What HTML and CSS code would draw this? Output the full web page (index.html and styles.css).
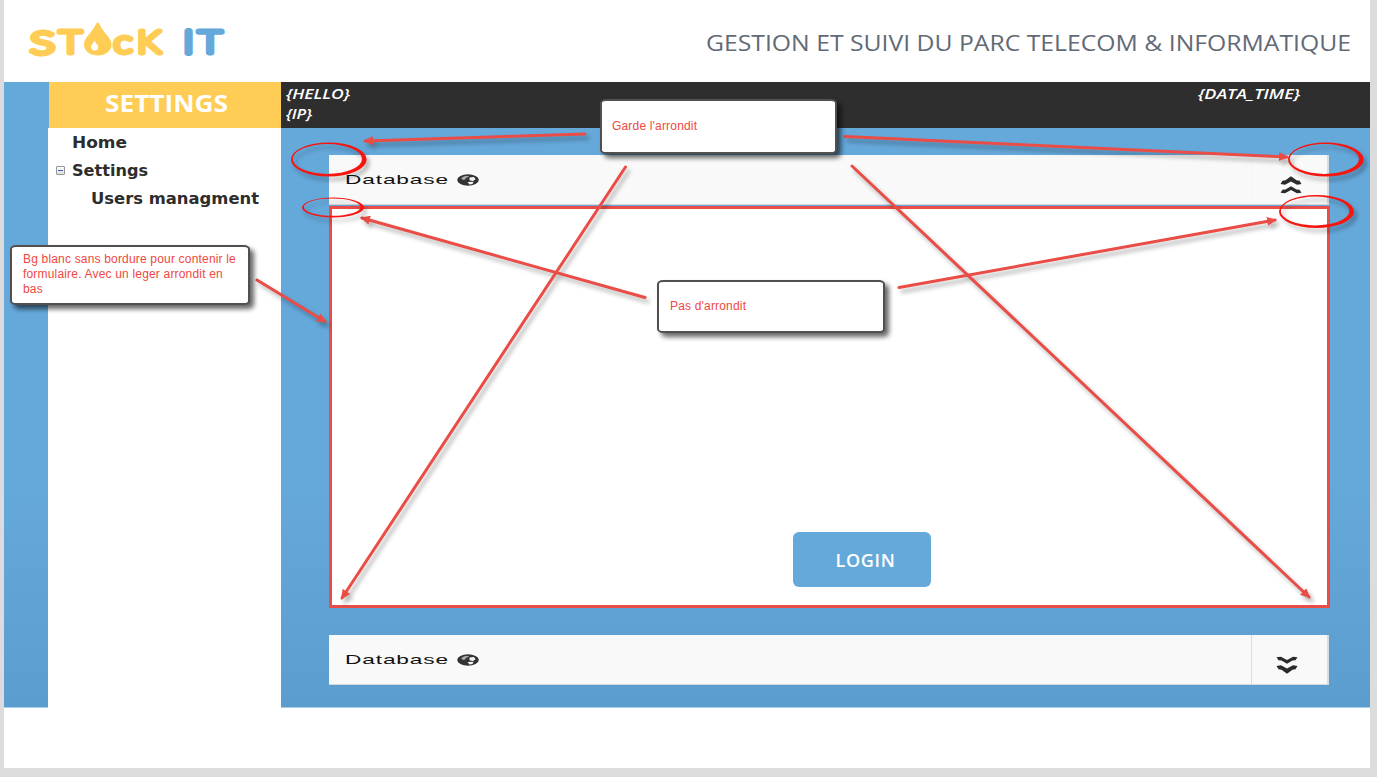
FILE: index.html
```html
<!DOCTYPE html>
<html lang="fr">
<head>
<meta charset="utf-8">
<title>Stock IT</title>
<link rel="stylesheet" href="styles.css">
</head>
<body>
<svg class="defs" width="0" height="0">
  <defs>
    <symbol id="globe" viewBox="0 0 22 12">
      <ellipse cx="11" cy="6" rx="10.8" ry="5.8" fill="#333"/>
      <path d="M4.500 3.700 Q7 1.800 11 1.700 L12 2.600 L9 4 L8 5.500 L6 6 Q4 5 4.500 3.700Z" fill="#aaa"/>
      <path d="M12.500 3.600 L17 3 L18.500 5.200 L16 7 L12.500 6.200Z M10.500 8 L16.500 7.800 L15.500 10 L12.500 10.500Z" fill="#f4f4f4"/>
    </symbol>
    <symbol id="chevrons" viewBox="0 0 22 18">
      <path d="M0.500 1.200 L5 0.800 L11 4 L17 0.800 L21.500 1.200 L19.500 4.300 L16.500 4.600 L11 7.800 L5.500 4.600 L2.500 4.300Z M0.500 10 L5 9.300 L11 12.600 L17 9.300 L21.500 10 L19.500 13.300 L16.500 13.800 L11 17.800 L5.500 13.800 L2.500 13.300Z" fill="#2b2b2b"/>
    </symbol>
  </defs>
</svg>
<div class="page">
  <header class="top">
    <svg class="logo" width="200" height="40" viewBox="27 20 200 40">
      <g class="logo-text yellow">
        <text x="30" y="53.500" textLength="25" lengthAdjust="spacingAndGlyphs">S</text>
        <text x="59" y="53" textLength="23" lengthAdjust="spacingAndGlyphs">T</text>
        <text x="113.500" y="53" textLength="19" lengthAdjust="spacingAndGlyphs">c</text>
        <text x="137" y="53" textLength="24" lengthAdjust="spacingAndGlyphs">K</text>
      </g>
      <path class="drop" fill-rule="evenodd" d="M97.500 22.500 Q99 22.500 100 25 C103 33 111.500 37 111.500 44.500 C111.500 51 105.500 55.500 98 55.500 C90 55.500 84 51 84 44.500 C84 37 92 33 95.500 25 Q96.500 22.500 97.500 22.500Z M94.500 40.500 C93.500 43.500 91 44.500 91 47 C91 49.500 92.500 50.500 94.500 50.500 C96.700 50.500 98.200 49.500 98.200 47 C98.200 44.500 95.500 43.500 94.500 40.500Z"/>
      <g class="logo-text blue">
        <text class="wide-stem" x="184" y="52.500" textLength="9" lengthAdjust="spacingAndGlyphs">I</text>
        <text x="198" y="53" textLength="24" lengthAdjust="spacingAndGlyphs">T</text>
      </g>
    </svg>
    <svg class="slogan" width="650" height="36"><text x="3" y="25" textLength="645" lengthAdjust="spacingAndGlyphs">GESTION ET SUIVI DU PARC TELECOM &amp; INFORMATIQUE</text></svg>
  </header>

  <div class="body">
    <aside class="sidebar">
      <h1 class="side-title"><svg width="232" height="46"><text x="56" y="30" textLength="123" lengthAdjust="spacingAndGlyphs">SETTINGS</text></svg></h1>
      <nav class="menu">
        <svg class="item" width="200" height="28"><text x="0" y="20" textLength="55" lengthAdjust="spacingAndGlyphs">Home</text></svg>
        <div class="item branch">
          <i class="toggle"></i>
          <svg width="200" height="28"><text x="0" y="20" textLength="76" lengthAdjust="spacingAndGlyphs">Settings</text></svg>
        </div>
        <svg class="item sub" width="185" height="28"><text x="0" y="20" textLength="168" lengthAdjust="spacingAndGlyphs">Users managment</text></svg>
      </nav>
    </aside>
    <main class="main">
      <div class="infobar">
        <svg width="90" height="46"><text x="0" y="17" textLength="64" lengthAdjust="spacingAndGlyphs">{HELLO}</text><text x="0" y="36.500" textLength="26" lengthAdjust="spacingAndGlyphs">{IP}</text></svg>
        <svg width="107" height="46"><text x="0" y="17" textLength="102" lengthAdjust="spacingAndGlyphs">{DATA_TIME}</text></svg>
      </div>
      <div class="content">
        <section class="bar">
          <div class="bar-name">
            <svg width="106" height="20"><text x="0" y="14" textLength="104" lengthAdjust="spacingAndGlyphs">Database</text></svg>
            <svg class="globe" width="22" height="12"><use href="#globe"/></svg>
          </div>
          <div class="bar-toggle open"><svg width="22" height="18"><use href="#chevrons"/></svg></div>
        </section>
        <section class="panel"><button class="login">LOGIN</button></section>
        <section class="bar">
          <div class="bar-name">
            <svg width="106" height="20"><text x="0" y="14" textLength="104" lengthAdjust="spacingAndGlyphs">Database</text></svg>
            <svg class="globe" width="22" height="12"><use href="#globe"/></svg>
          </div>
          <div class="bar-toggle"><svg width="22" height="18"><use href="#chevrons"/></svg></div>
        </section>
      </div>
    </main>
  </div>
</div>

<!-- Review notes drawn over the page -->
<svg class="notes" width="1377" height="777">
  <defs>
    <marker id="head" markerUnits="userSpaceOnUse" markerWidth="12" markerHeight="10" refX="8" refY="4.500" orient="auto"><path d="M0 0 L10 4.500 L0 9Z" fill="#ea4c46"/></marker>
  </defs>
  <g class="arrows">
    <path d="M585 134 L365 141"/>
    <path d="M845 136.500 L1287 157"/>
    <path d="M625.500 167 L342 598"/>
    <path d="M852 166 L1309 597"/>
    <path d="M645 297.500 L362 218"/>
    <path d="M899 287.500 L1275 220"/>
    <path d="M257 280 L325 321.500"/>
  </g>
  <g class="rings">
    <path d="M291 159.500a37.800 17 0 1 0 75.600 0a37.800 17 0 1 0 -75.600 0Z M292.800 159a34.600 14.900 0 1 0 69.200 0a34.600 14.900 0 1 0 -69.200 0Z"/>
    <path d="M302 207.500a31 10 0 1 0 62 0a31 10 0 1 0 -62 0Z M303.800 207.100a28.400 8.700 0 1 0 56.800 0a28.400 8.700 0 1 0 -56.800 0Z"/>
    <path d="M1288 159.500a37.800 17 0 1 0 75.600 0a37.800 17 0 1 0 -75.600 0Z M1289.800 159a34.600 14.900 0 1 0 69.200 0a34.600 14.900 0 1 0 -69.200 0Z"/>
    <path d="M1279 211.500a37.500 16.500 0 1 0 75 0a37.500 16.500 0 1 0 -75 0Z M1280.800 211a34.300 14.400 0 1 0 68.600 0a34.300 14.400 0 1 0 -68.600 0Z"/>
  </g>
</svg>
<div class="callout keep">Garde l'arrondit</div>
<div class="callout none">Pas d'arrondit</div>
<div class="callout white-bg">Bg blanc sans bordure pour contenir le<br>formulaire. Avec un leger arrondit en<br>bas</div>
</body>
</html>
```
FILE: styles.css
```css
* { box-sizing: border-box; }
body {
  margin: 0;
  height: 777px;
  padding: 0 7px 9px 4px;
  background: #dcdcdc;
  overflow: hidden;
  font-family: "Liberation Sans", Arial, sans-serif;
}
svg { display: block; flex: none; }
.defs { position: absolute; }
.page { height: 768px; background: #fff; }

.top {
  height: 82px;
  display: flex;
  justify-content: space-between;
  padding: 20px 17px 0 23px;
}
.logo-text {
  font: 300 32px Lato, sans-serif;
  stroke-width: 4.8px;
  stroke-linejoin: round;
}
.wide-stem { stroke-width: 6px; }
.yellow { fill: #ffcd55; stroke: #ffcd55; }
.blue { fill: #65a8da; stroke: #65a8da; }
.drop { fill: #ffcd55; }
.slogan { margin-top: 6px; }
.slogan text { font: 400 21px "Open Sans", sans-serif; fill: #626a76; }

.body {
  height: 626px;
  display: grid;
  grid-template-columns: 233px 1fr;
  padding-left: 44px;
  background: linear-gradient(#65a8da 0, #65a8da 65%, #5b9dce 100%);
  border-bottom: 1px solid #a9cfeb;
}
.sidebar { background: #fff; margin-bottom: -1px; }
.side-title { margin: 0; padding-left: 1px; height: 46px; background: #ffcd55; background-clip: content-box; box-shadow: inset 1px 0 #65a8da; }
.side-title text { font: 700 22.5px "Open Sans", sans-serif; fill: #fff; }
.menu text { font: 700 16px "DejaVu Sans", sans-serif; fill: #2d2d2d; }
.item { margin-left: 24px; }
.item.sub { margin-left: 43px; }
.branch { display: flex; align-items: center; margin-left: 8px; gap: 7px; }
.toggle {
  width: 9px;
  height: 9px;
  border: 1px solid #979797;
  border-radius: 1px;
  background: linear-gradient(#4560a8, #4560a8) center / 5px 1px no-repeat, linear-gradient(#fff, #dedede);
}

.infobar {
  height: 46px;
  padding: 0 65px 0 5px;
  display: flex;
  justify-content: space-between;
  background: #2e2e2e;
}
.infobar text { font: italic 600 15px "Open Sans", sans-serif; fill: #fff; }
.content { padding: 27px 41px 0 48px; }
.bar {
  height: 50px;
  display: flex;
  background: #f9f9f9;
  border-right: 2px solid #d8dde1;
  border-bottom: 1px solid #d8d8d8;
}
.bar-name { flex: 1; display: flex; padding: 15px 0 0 16px; }
.bar-name text { font: 400 13px "Liberation Sans", Arial, sans-serif; letter-spacing: .5px; fill: #111; }
.globe { margin: 4px 0 0 6px; }
.bar-toggle { width: 76px; border-left: 1px solid #ddd; padding: 21px 0 0 24px; }
.bar-toggle.open { border-color: #f6f6f6; padding-left: 28px; }
.open svg { transform: rotate(180deg); }
.panel {
  height: 402px;
  margin: 1px -1px 27px 0;
  border: 3px solid #ea4c46;
  background: #fff;
  display: flex;
  justify-content: center;
  align-items: flex-end;
  padding: 0 0 18px 65px;
}
.login {
  width: 138px;
  height: 55px;
  padding: 0 0 0 7px;
  border: 0;
  border-radius: 6px;
  background: #65a8da;
  color: #fff;
  font: 600 18px "Open Sans", sans-serif;
  letter-spacing: .7px;
}

.notes { position: absolute; left: 0; top: 0; }
.arrows path {
  fill: none;
  stroke: #ea4c46;
  stroke-width: 3px;
  stroke-linecap: round;
  marker-end: url(#head);
}
.arrows, .rings { filter: drop-shadow(3px 4px 2px rgba(0, 0, 0, .3)); }
.rings { fill: #f7150f; fill-rule: evenodd; }
.callout {
  position: absolute;
  border: 2px solid #505050;
  border-radius: 6px / 4px;
  background: #fff;
  box-shadow: 4px 4px 5px rgba(0, 0, 0, .6);
  color: #f04740;
  font-size: 12px;
  line-height: 15px;
  letter-spacing: .18px;
  white-space: nowrap;
}
.keep { left: 600px; top: 99px; width: 237px; height: 55px; padding: 18px 10px; }
.none { left: 657px; top: 280px; width: 228px; height: 53px; padding: 17px 11px; }
.white-bg { left: 10px; top: 245px; width: 240px; height: 60px; padding: 5px 11px; }
```
